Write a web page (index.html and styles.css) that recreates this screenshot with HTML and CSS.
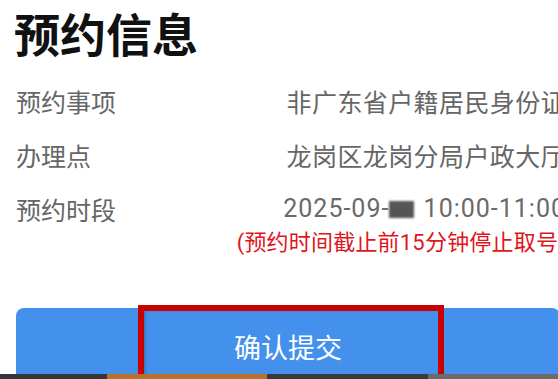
FILE: index.html
```html
<!DOCTYPE html>
<html lang="zh-CN">
<head>
  <meta charset="UTF-8">
  <meta name="viewport" content="width=device-width, initial-scale=1.0">
  <title>预约信息</title>
  <link rel="stylesheet" href="styles.css">
</head>
<body>

  <div class="page">
    <h1 class="title">预约信息</h1>

    <div class="row">
      <span class="label">预约事项</span>
      <span class="value">非广东省户籍居民身份证</span>
    </div>
    <div class="row">
      <span class="label">办理点</span>
      <span class="value">龙岗区龙岗分局户政大厅</span>
    </div>
    <div class="row">
      <span class="label">预约时段</span>
      <div class="value-group">
        <span class="value date">2025-09-<span class="masked"></span> 10:00-11:00</span>
        <span class="note">(预约时间截止前15分钟停止取号)</span>
      </div>
    </div>

    <button class="btn">确认提交</button>
  </div>

  <!-- 标注框 -->
  <div class="highlight"></div>

  <div class="bottom-bar">
    <span class="seg seg-dark"></span>
    <span class="seg seg-orange"></span>
    <span class="seg seg-dark2"></span>
    <span class="seg seg-gray"></span>
  </div>

</body>
</html>
```

FILE: styles.css
```css
html, body {
  margin: 0;
  padding: 0;
  height: 100%;
  overflow: hidden;
  background: #fff;
}

body {
  font-family: "Noto Sans CJK SC", "Noto Sans", sans-serif;
  position: relative;
}

.page {
  width: 550px;
  padding: 6px 0 0 16px;
}

.title {
  margin: 0 0 28px -2px;
  font-size: 46px;
  line-height: 52px;
  font-weight: bold;
  color: #111;
}

.row {
  display: flex;
  justify-content: space-between;
  align-items: flex-start;
  margin-bottom: 24px;
  font-size: 25px;
  line-height: 30px;
  color: #666;
}

.row:last-of-type {
  margin-bottom: 0;
}

.label {
  white-space: nowrap;
}

.value {
  white-space: nowrap;
  letter-spacing: 0.4px;
}

.value-group {
  display: flex;
  flex-direction: column;
  align-items: flex-end;
}

.date {
  font-family: Roboto, "Noto Sans CJK SC", sans-serif;
  letter-spacing: 1px;
  color: #6a6a6a;
}

.masked {
  display: inline-block;
  width: 25px;
  height: 17px;
  margin: 0 2px -1px 0;
  background: #555;
  filter: blur(1.2px);
}

.note {
  margin-top: 4px;
  font-family: Roboto, "Noto Sans CJK SC", sans-serif;
  font-size: 22px;
  line-height: 30px;
  letter-spacing: 0.2px;
  color: #e0141b;
  white-space: nowrap;
}

.btn {
  display: block;
  width: 544px;
  height: 78px;
  margin-top: 50px;
  padding: 0;
  border: none;
  border-radius: 8px;
  background: #4391ec;
  color: #fff;
  font-family: inherit;
  font-size: 27px;
  line-height: 78px;
}

.highlight {
  position: absolute;
  left: 138px;
  top: 305px;
  width: 294px;
  height: 90px;
  border: 6px solid #c80000;
  box-shadow: inset 2px 0 2px rgba(0, 0, 0, 0.15);
}

.bottom-bar {
  position: absolute;
  left: 0;
  right: 0;
  bottom: 0;
  height: 5px;
  display: flex;
}

.seg {
  display: block;
  height: 100%;
}

.seg-dark {
  width: 107px;
  background: #33363b;
}

.seg-orange {
  width: 160px;
  background: #b8702f;
}

.seg-dark2 {
  width: 161px;
  background: #383a3f;
}

.seg-gray {
  flex: 1;
  background: #6b6b6b;
}
```
